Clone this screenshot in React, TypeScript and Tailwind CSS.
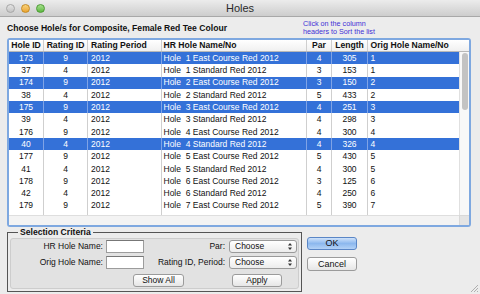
type Hole = {
  id: string;
  rating: string;
  period: string;
  name: string;
  par: string;
  length: string;
  orig: string;
  selected?: boolean;
};

const holes: Hole[] = [
  { id: '173', rating: '9', period: '2012', name: 'Hole  1 East Course Red 2012', par: '4', length: '305', orig: '1', selected: true },
  { id: '37', rating: '4', period: '2012', name: 'Hole  1 Standard Red 2012', par: '3', length: '153', orig: '1' },
  { id: '174', rating: '9', period: '2012', name: 'Hole  2 East Course Red 2012', par: '3', length: '150', orig: '2', selected: true },
  { id: '38', rating: '4', period: '2012', name: 'Hole  2 Standard Red 2012', par: '5', length: '433', orig: '2' },
  { id: '175', rating: '9', period: '2012', name: 'Hole  3 East Course Red 2012', par: '4', length: '251', orig: '3', selected: true },
  { id: '39', rating: '4', period: '2012', name: 'Hole  3 Standard Red 2012', par: '4', length: '298', orig: '3' },
  { id: '176', rating: '9', period: '2012', name: 'Hole  4 East Course Red 2012', par: '4', length: '300', orig: '4' },
  { id: '40', rating: '4', period: '2012', name: 'Hole  4 Standard Red 2012', par: '4', length: '326', orig: '4', selected: true },
  { id: '177', rating: '9', period: '2012', name: 'Hole  5 East Course Red 2012', par: '5', length: '430', orig: '5' },
  { id: '41', rating: '4', period: '2012', name: 'Hole  5 Standard Red 2012', par: '4', length: '300', orig: '5' },
  { id: '178', rating: '9', period: '2012', name: 'Hole  6 East Course Red 2012', par: '3', length: '125', orig: '6' },
  { id: '42', rating: '4', period: '2012', name: 'Hole  6 Standard Red 2012', par: '4', length: '250', orig: '6' },
  { id: '179', rating: '9', period: '2012', name: 'Hole  7 East Course Red 2012', par: '5', length: '390', orig: '7' },
];

const headers = ['Hole ID', 'Rating ID', 'Rating Period', 'HR Hole Name/No', 'Par', 'Length', 'Orig Hole Name/No'];
// alignment per column
const align = [
  'justify-center',
  'justify-center',
  'pl-[3px]',
  'pl-[1.5px]',
  'justify-center',
  'justify-center',
  'pl-[2.5px]',
];
const gridCols = 'grid grid-cols-[35px_44px_74px_145px_25px_36px_91px]';

function Select() {
  return (
    <div className="ml-[4px] flex h-[13px] w-[68px] items-center justify-between rounded-[3px] border border-[#9a9a9a] bg-linear-to-b from-white to-[#ececec] pl-[5px] pr-[4px] text-[8.5px] leading-none text-[#111]">
      <span>Choose</span>
      <svg width="4" height="7" viewBox="0 0 4 7">
        <path d="M0 2.6 L2 0 L4 2.6 Z" fill="#333" />
        <path d="M0 4.4 L2 7 L4 4.4 Z" fill="#333" />
      </svg>
    </div>
  );
}

function MacButton({ label, className }: { label: string; className: string }) {
  return (
    <div
      className={`flex items-center justify-center rounded-[3px] border border-[#9b9b9b] bg-linear-to-b from-white to-[#e6e6e6] text-[8.5px] leading-none text-[#111] ${className}`}
    >
      {label}
    </div>
  );
}

export default function App() {
  return (
    <div className="relative flex h-[294px] w-[480px] flex-col overflow-hidden bg-[#ececec] font-[family-name:'Liberation_Sans',Arial,sans-serif] text-[#111]">
      {/* title bar */}
      <div className="grid h-[17px] grid-cols-[60px_1fr_60px] items-center border-b border-[#a8a8a8] bg-linear-to-b from-[#ececec] to-[#cdcdcd]">
        <div className="flex items-center gap-[6px] pl-[5.5px]">
          <span className="h-[9px] w-[9px] rounded-full border border-[#a6a6a6] bg-linear-to-b from-[#e4e4e4] to-[#c4c4c4]" />
          <span className="h-[9px] w-[9px] rounded-full border border-[#c48a24] bg-linear-to-b from-[#f8d27a] to-[#eba52c]" />
          <span className="h-[9px] w-[9px] rounded-full border border-[#4c9a34] bg-linear-to-b from-[#a6e08c] to-[#5cb83e]" />
        </div>
        <div className="text-center text-[11px] leading-none text-[#2a2a2a]">Holes</div>
        <div />
      </div>

      {/* heading */}
      <div className="flex h-[21px] items-center">
        <div className="w-[303px] pl-[7px] pt-[1px] text-[8.6px] font-bold leading-none">
          Choose Hole/s for Composite, Female Red Tee Colour
        </div>
        <div className="text-[7.2px] leading-[8px] text-[#3f2fd6]">
          Click on the column
          <br />
          headers to Sort the list
        </div>
      </div>

      {/* table */}
      <div className="mx-[7px] flex h-[189px] w-[464px] rounded-[3px] border-2 border-[#7ea8e0] bg-white">
        <div className="flex w-[450px] flex-col">
          <div className={`${gridCols} h-[12px] border-b border-[#b8b8b8] bg-linear-to-b from-white to-[#f0f0f0]`}>
            {headers.map((h, i) => (
              <div
                key={h}
                className={`flex items-center text-[8.6px] font-bold leading-none ${align[i]} ${i < 6 ? 'border-r border-[#cfcfcf]' : ''}`}
              >
                {h}
              </div>
            ))}
          </div>
          {holes.map((r) => {
            const cells = [r.id, r.rating, r.period, r.name, r.par, r.length, r.orig];
            return (
              <div
                key={r.id}
                className={`${gridCols} h-[12.3px] text-[8.5px] leading-none ${r.selected ? 'bg-[#3471d8] text-white' : 'text-[#111]'}`}
              >
                {cells.map((c, i) => (
                  <div
                    key={i}
                    className={`flex items-center whitespace-pre ${align[i]} ${
                      i < 6 ? (r.selected ? 'border-r border-[#7fa3e6]' : 'border-r border-[#cfcfcf]') : ''
                    }`}
                  >
                    {c}
                  </div>
                ))}
              </div>
            );
          })}
          <div className={`${gridCols} flex-1`}>
            {headers.map((h, i) => (
              <div key={h} className={i < 6 ? 'border-r border-[#cfcfcf]' : ''} />
            ))}
          </div>
          <div className="h-[10px] border-t border-[#dedede] bg-[#f3f3f3]" />
        </div>
        {/* vertical scrollbar */}
        <div className="flex w-[10px] flex-col">
          <div className="h-[12px] border-b border-[#b8b8b8] bg-linear-to-b from-white to-[#f0f0f0]" />
          <div className="flex flex-1 justify-center border-l border-[#e0e0e0] bg-[#f8f8f8]">
            <div className="mt-[1px] h-[57px] w-[6px] rounded-full bg-[#c3c3c3]" />
          </div>
          <div className="h-[10px] border-l border-t border-[#d8d8d8] bg-[#e4e4e4]" />
        </div>
      </div>

      {/* bottom */}
      <div className="flex px-[7px]">
        <fieldset className="flex h-[65px] w-[295px] flex-col border border-[#555] px-[2px] pb-[2px]">
          <legend className="ml-[8px] px-[2px] text-[8.6px] font-bold leading-[11px]">Selection Criteria</legend>
          <div className="flex-1 rounded-[3px] border border-[#cdcdcd] bg-[#e2e2e2] pt-[1px] text-[8.5px] leading-none">
            <div className="flex h-[13px] items-center">
              <div className="w-[92px] text-right">HR Hole Name:</div>
              <div className="ml-[3px] h-[13px] w-[38px] border border-[#9c9c9c] border-t-[#777] bg-white" />
              <div className="w-[81px] text-right">Par:</div>
              <Select />
            </div>
            <div className="mt-[2.5px] flex h-[13px] items-center">
              <div className="w-[92px] text-right">Orig Hole Name:</div>
              <div className="ml-[3px] h-[13px] w-[38px] border border-[#9c9c9c] border-t-[#777] bg-white" />
              <div className="w-[81px] text-right">Rating ID, Period:</div>
              <Select />
            </div>
            <div className="mt-[5.5px] flex h-[13px] items-center">
              <MacButton label="Show All" className="ml-[122px] h-[13px] w-[51px]" />
              <MacButton label="Apply" className="ml-[48px] h-[13px] w-[50px]" />
            </div>
          </div>
        </fieldset>

        <div className="ml-[5px] flex flex-col pt-[10px]">
          <div className="flex h-[13px] w-[50px] items-center justify-center rounded-[3px] border border-[#5a86c6] bg-linear-to-b from-[#cfe2fa] via-[#8cb8ee] to-[#b4d2f6] text-[9px] leading-none text-[#111]">
            OK
          </div>
          <MacButton label="Cancel" className="mt-[7px] h-[14px] w-[50px] text-[9px]" />
        </div>
      </div>

      {/* resize grip */}
      <svg className="absolute bottom-[2px] right-[2px]" width="8" height="8" viewBox="0 0 8 8">
        <path d="M1 8 L8 1 M4 8 L8 4 M7 8 L8 7" stroke="#a0a0a0" strokeWidth="0.8" />
      </svg>
    </div>
  );
}
